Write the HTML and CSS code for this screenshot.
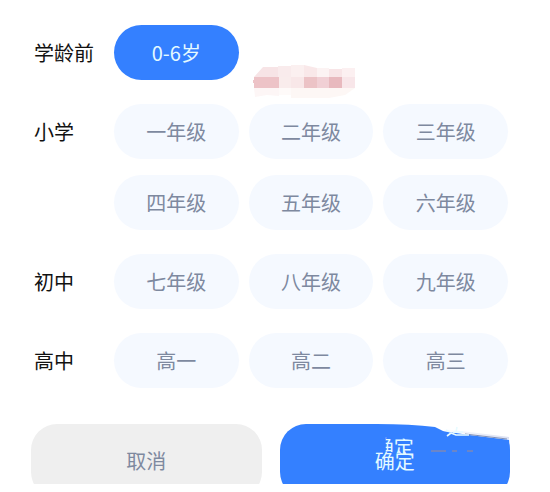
FILE: index.html
```html
<!DOCTYPE html>
<html lang="zh-CN">
<head>
<meta charset="utf-8">
<meta name="viewport" content="width=device-width, initial-scale=1">
<title>选择年级</title>
<link rel="stylesheet" href="styles.css">
</head>
<body>
<main class="picker">
  <section class="group" aria-labelledby="g1">
    <h2 class="label" id="g1">学龄前</h2>
    <div class="options">
      <button class="pill selected" type="button" aria-pressed="true">0-6岁</button>
      <svg class="mosaic" viewBox="0 0 104 36" aria-hidden="true">
        <path fill="#f7e4e6" d="M1 12L10 2H25V12z"/>
        <path fill="#f9ebec" d="M25 1H38V12H25z"/>
        <path fill="#fbf0f0" d="M38 0H51V12H38z"/>
        <path fill="#f9e8e9" d="M51 0L64 3V12H51z"/>
        <path fill="#fcf3f3" d="M64 3H76V12H64z"/>
        <path fill="#f8e5e7" d="M76 4H89V12H76z"/>
        <path fill="#fcf0f1" d="M89 3H102V12H89z"/>
        <path fill="#edc3c7" d="M1 12H26V23H1V18H0V15H1z"/>
        <path fill="#f9ecec" d="M26 12H38V23H26z"/>
        <path fill="#f8e7e8" d="M38 12H51V23H38z"/>
        <path fill="#ecc3c6" d="M51 12H64V23H51z"/>
        <path fill="#f1d0d5" d="M64 12H76V23H64z"/>
        <path fill="#e8b9be" d="M76 12H89V23H76z"/>
        <path fill="#f8e6e9" d="M89 12H102V23H89z"/>
        <path fill="#fdf6f6" d="M1 23H26V31L14 30 2 32z"/>
        <path fill="#fefaf9" d="M26 23H38V30H26z"/>
        <path fill="#fdf7f5" d="M38 23H102L92 30 76 33H38z"/>
      </svg>
    </div>
  </section>
  <section class="group" aria-labelledby="g2">
    <h2 class="label" id="g2">小学</h2>
    <div class="options">
      <button class="pill" type="button">一年级</button>
      <button class="pill" type="button">二年级</button>
      <button class="pill" type="button">三年级</button>
      <button class="pill" type="button">四年级</button>
      <button class="pill" type="button">五年级</button>
      <button class="pill" type="button">六年级</button>
    </div>
  </section>
  <section class="group" aria-labelledby="g3">
    <h2 class="label" id="g3">初中</h2>
    <div class="options">
      <button class="pill" type="button">七年级</button>
      <button class="pill" type="button">八年级</button>
      <button class="pill" type="button">九年级</button>
    </div>
  </section>
  <section class="group" aria-labelledby="g4">
    <h2 class="label" id="g4">高中</h2>
    <div class="options">
      <button class="pill" type="button">高一</button>
      <button class="pill" type="button">高二</button>
      <button class="pill" type="button">高三</button>
    </div>
  </section>
  <footer class="actions">
    <button class="action cancel" type="button">取消</button>
    <button class="action confirm" type="button">
      <span class="caption">确定<span class="echo" aria-hidden="true">确定</span></span>
      <svg class="smear" viewBox="0 0 160 60" aria-hidden="true">
        <defs>
          <linearGradient id="edge" x1="0" x2="1">
            <stop offset="0" stop-color="#fff"/>
            <stop offset="1" stop-color="#d9dff2"/>
          </linearGradient>
        </defs>
        <path fill="#3480ff" d="M120 10L150 15 151 32 149 44H120z"/>
        <path fill="#fff" d="M18 0Q52 0 76 3L84 7 110 11 151 16H160V0z"/>
        <path fill="none" stroke="url(#edge)" stroke-width="2" d="M84 6L110 9 150 14"/>
        <path fill="none" stroke="#7f8fb8" stroke-width="1" d="M106 10L148 15"/>
        <path fill="none" stroke="#e8fbff" stroke-width="1.6" d="M87 6L91 8M88 12L92 9 97 11 110 11M98 3L97 8M94 8H104"/>
        <path fill="none" stroke="#a18b91" stroke-width="1" d="M72 27H87M93 27H98M108 27H114"/>
        <path fill="#fafaff" d="M156 4H166V10L160 15z"/>
      </svg>
    </button>
  </footer>
</main>
</body>
</html>
```
FILE: styles.css
```css
* {
  box-sizing: border-box;
}

body {
  margin: 0;
  background: #fff;
  font-family: "Noto Sans CJK SC", sans-serif;
  font-size: 20px;
  line-height: 30px;
}

button {
  border: 0;
  padding: 0;
  font: inherit;
  cursor: pointer;
}

.picker {
  display: flex;
  flex-direction: column;
  gap: 24px;
  padding: 25px 40px 8px 31px;
}

.group {
  display: grid;
  grid-template-columns: 80px 1fr;
  padding: 0 2px 0 3px;
}

.label {
  margin: 0;
  font-size: 20px;
  font-weight: 400;
  line-height: 55px;
  color: #111;
}

.options {
  position: relative;
  display: grid;
  grid-template-columns: repeat(3, 1fr);
  gap: 16px 10px;
}

.pill {
  height: 55px;
  border-radius: 28px;
  background: #f5f9ff;
  color: #7e899f;
}

.pill.selected {
  background: #3480ff;
  color: #e4faff;
}

.mosaic {
  position: absolute;
  top: 40px;
  left: 139px;
  width: 104px;
  height: 36px;
}

.actions {
  display: grid;
  grid-template-columns: 1fr 1fr;
  gap: 18px;
  height: 60px;
  margin-top: 12px;
  overflow: hidden;
}

.action {
  height: 74px;
  border-radius: 26px;
}

.cancel {
  background: #efefef;
  color: #7e899f;
}

.confirm {
  position: relative;
  background: #3480ff;
  color: #e4faff;
}

.caption {
  position: relative;
}

.echo {
  position: absolute;
  top: -14px;
  left: -1px;
  white-space: nowrap;
  clip-path: polygon(12px 4px, 40px 8px, 40px 24px, 12px 19px);
}

.smear {
  position: absolute;
  top: 0;
  right: -9px;
  width: 160px;
  height: 60px;
}
```
